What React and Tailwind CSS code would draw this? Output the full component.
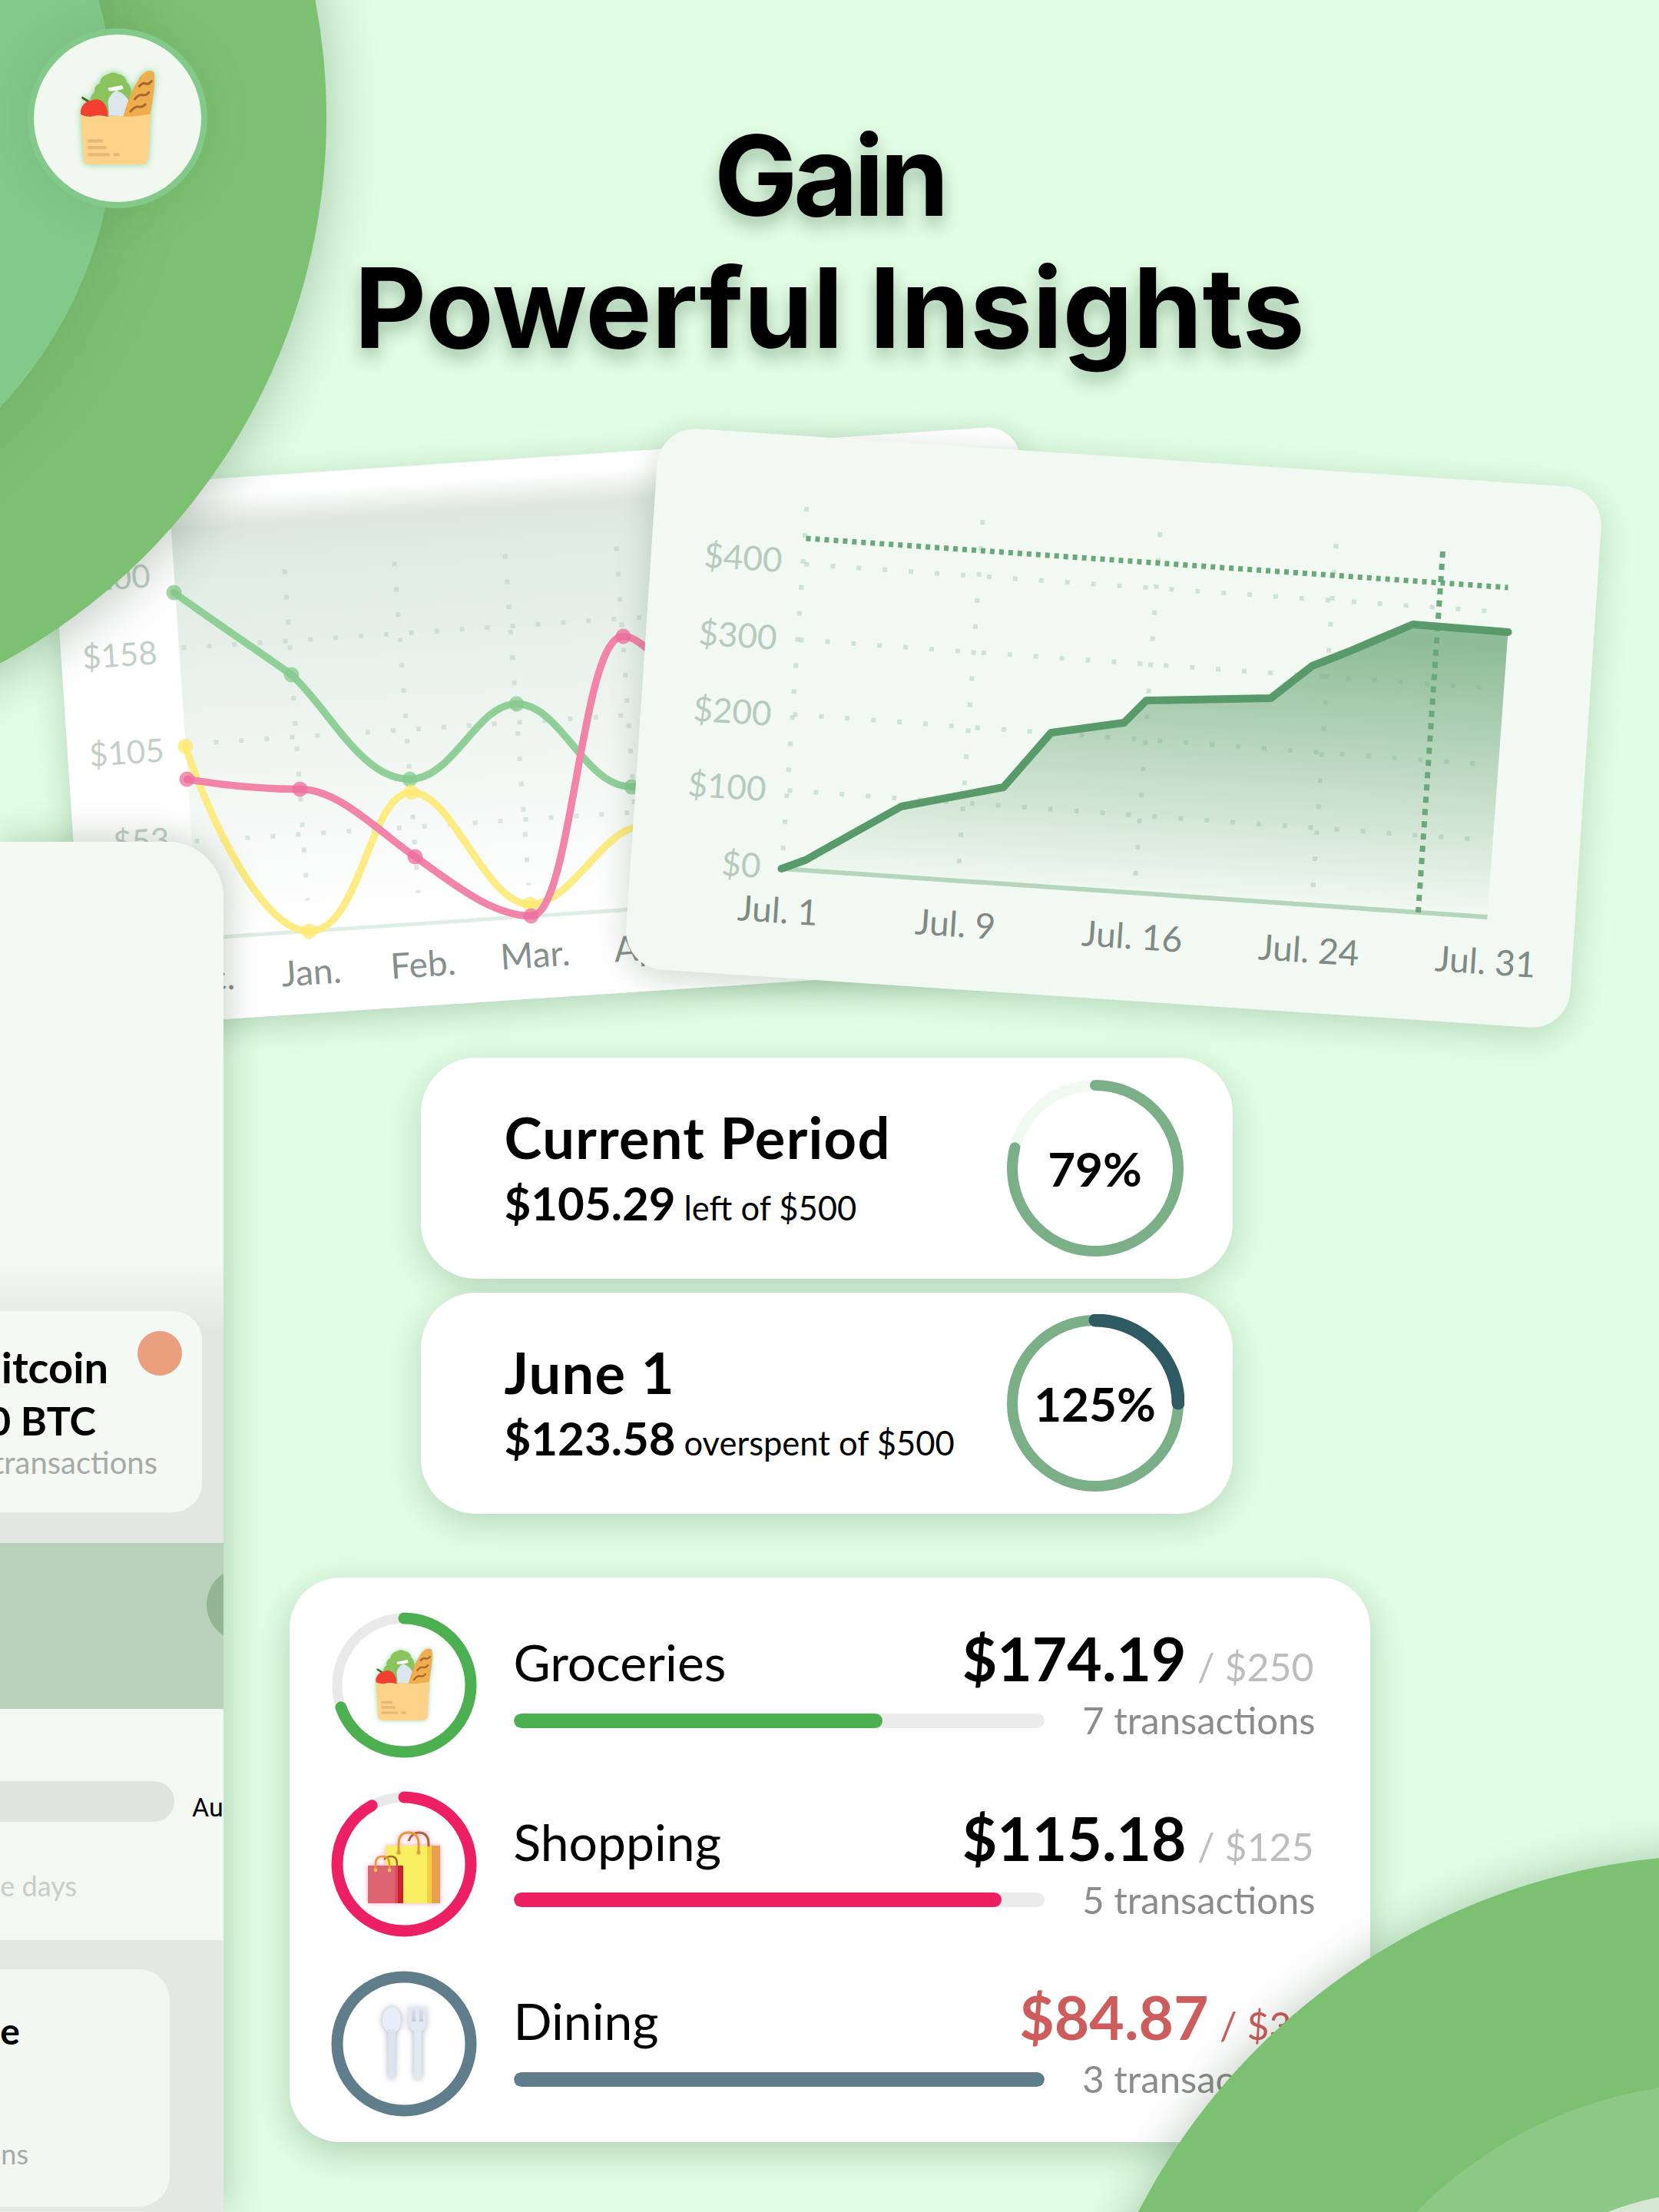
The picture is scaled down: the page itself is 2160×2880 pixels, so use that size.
import React from "react";

function GroceryBag({ className }) {
  return (
    <svg viewBox="215 185 305 380" className={className}>
      <path d="M262 318 Q258 290 278 275 Q275 250 298 240 Q302 212 330 205 Q350 190 372 205 Q398 208 404 235 Q425 255 420 285 Q428 310 410 345 L280 365 Z" fill="#8bc45c" />
      <path d="M335 365 L330 312 Q335 285 362 268 Q398 280 412 310 L395 368 Z" fill="#dbe6ef" />
      <path d="M330 258 L386 248 L390 262 Q360 272 334 270 Z" fill="#ffffff" />
      <path d="M390 368 Q415 275 458 212 Q488 180 508 196 Q520 225 495 362 Q440 376 390 368 Z" fill="#f0ad4e" />
      <path d="M452 252 Q468 234 480 243 Q490 244 500 232 M435 302 Q452 280 468 287 Q480 288 490 275 M418 350 Q438 326 452 332 Q465 334 476 322" fill="none" stroke="#a5672f" strokeWidth="9" strokeLinecap="round" />
      <path d="M232 297 L265 318" stroke="#3a6b1e" strokeWidth="9" strokeLinecap="round" />
      <path d="M224 345 Q232 312 268 306 Q300 294 320 325 Q332 350 330 372 Q300 362 270 370 Q248 372 224 362 Z" fill="#f13f30" />
      <path d="M224 362 Q248 376 270 369 Q300 360 330 371 Q360 362 390 370 Q430 372 497 360 L487 535 Q485 557 460 557 L260 557 Q238 557 235 535 Z" fill="#fdd38a" />
      <path d="M252 458 H310 V471 H252 Z M252 484 H324 V497 H252 Z M252 512 H336 V524 H252 Z M353 512 H377 V524 H353 Z" fill="#e4b878" />
    </svg>
  );
}

function ShoppingBags({ className }) {
  return (
    <svg viewBox="0 0 100 98" className={className}>
      <rect x="26" y="20" width="54" height="75" fill="#f9ef62" />
      <rect x="80" y="20" width="6" height="75" fill="#f6d03c" />
      <rect x="86" y="20" width="11" height="75" fill="#e8a04f" />
      <path d="M56 14 Q60 3 69 3 Q82 3 82 18 V21" fill="none" stroke="#a9683a" strokeWidth="3" />
      <path d="M43 29 V18 Q43 3 56 3 Q69 3 69 18 V29" fill="none" stroke="#e39a34" strokeWidth="3" />
      <circle cx="43" cy="29" r="2.6" fill="#e39a34" />
      <circle cx="69" cy="29" r="2.6" fill="#e39a34" />
      <rect x="3" y="46" width="35" height="49" fill="#dd6470" />
      <rect x="38" y="46" width="4" height="49" fill="#d94d5c" />
      <rect x="42" y="46" width="7" height="49" fill="#c9222f" />
      <path d="M24 38 Q28 34 33 34 Q41 34 41 44 V46" fill="none" stroke="#a9683a" strokeWidth="2.5" />
      <path d="M13 52 V44 Q13 34 22 34 Q31 34 31 44 V52" fill="none" stroke="#e39a34" strokeWidth="2.5" />
      <circle cx="13" cy="52" r="2.4" fill="#f2c14e" />
      <circle cx="31" cy="52" r="2.4" fill="#f2c14e" />
    </svg>
  );
}

function Cutlery({ className }) {
  return (
    <svg viewBox="0 0 70 102" className={className}>
      <ellipse cx="19" cy="20" rx="12" ry="17" fill="#e8eef9" />
      <path d="M14 32 L15 94 Q19 100 23 94 L24 32 Z" fill="#dde4f0" />
      <path d="M41 3 H45 V22 H50 V3 H55 V22 H60 V3 H64 V22 Q64 31 58 35 L58 94 Q53 100 48 94 L48 35 Q41 31 41 22 Z" fill="#e1e7f3" />
    </svg>
  );
}

function Ring({ size, r, width, track, color, value, trackWidth, children, extra, extraWidth }) {
  const c = size / 2;
  return (
    <div className="relative flex shrink-0 items-center justify-center" style={{ width: size, height: size }}>
      <svg viewBox={`0 0 ${size} ${size}`} className="absolute inset-0 h-full w-full -rotate-90" fill="none">
        <circle cx={c} cy={c} r={r} stroke={track} strokeWidth={trackWidth || width} />
        {value >= 100 ? (
          <circle cx={c} cy={c} r={r} stroke={color} strokeWidth={width} />
        ) : (
          <circle cx={c} cy={c} r={r} stroke={color} strokeWidth={width} strokeLinecap="round" pathLength="100" strokeDasharray={`${value} 100`} />
        )}
        {extra ? (
          <circle cx={c} cy={c} r={r} stroke={extra} strokeWidth={extraWidth} strokeLinecap="round" pathLength="100" strokeDasharray="25 100" />
        ) : null}
      </svg>
      {children}
    </div>
  );
}

function PeriodCard({ title, amount, note, pct, value, extra }) {
  return (
    <div className="flex h-[288px] w-[1057px] items-center justify-between rounded-[72px] bg-white pl-[109px] pr-[63px] shadow-[0_12px_44px_rgba(20,70,30,0.2)]">
      <div className="flex flex-col pt-[7px] text-black">
        <div className="text-[74px] font-bold leading-[80px] tracking-[1.3px]">{title}</div>
        <div className="mt-[9px] flex items-baseline whitespace-nowrap leading-[72px]">
          <span className="text-[60px] font-bold">{amount}</span>
          <span className="ml-[11px] text-[43.5px] font-normal">{note}</span>
        </div>
      </div>
      <Ring size={232} r={108} width={14} track="#f0faf0" color="#7baf87" value={value} extra={extra} extraWidth={17}>
        <span className="relative text-[62px] font-bold leading-none text-black">{pct}</span>
      </Ring>
    </div>
  );
}

function CategoryRow({ icon, label, amount, limit, count, color, track, value, over }) {
  return (
    <div className="flex h-[233.5px] items-center">
      <Ring size={190} r={87} width={15} track={track} trackWidth={13} color={color} value={value}>
        {icon}
      </Ring>
      <div className="ml-[48px] flex w-[1042px] flex-col">
        <div className="-mt-[4px] flex h-[84px] items-baseline justify-between">
          <span className="text-[66px] font-normal leading-[84px] text-black">{label}</span>
          <span className="flex items-baseline whitespace-nowrap">
            <span className={`text-[78.5px] font-bold leading-[84px] ${over ? "text-[#cd5c5c]" : "text-black"}`}>{amount}</span>
            <span className={`ml-[14.5px] text-[50px] font-normal ${over ? "text-[#cd5c5c]" : "text-[#bdbdbd]"}`}>{limit}</span>
          </span>
        </div>
        <div className="mt-[11px] flex h-[54px] items-center justify-between">
          <div className="mt-[2px] h-[19px] w-[691px] overflow-hidden rounded-full bg-[#ebebeb]">
            <div className="h-full rounded-full" style={{ width: `${value}%`, background: color }} />
          </div>
          <span className="-mr-[2px] whitespace-nowrap text-[49px] font-normal leading-[54px] text-[#8c8c8c]">{count}</span>
        </div>
      </div>
    </div>
  );
}

function Label({ x, y, rot, children, anchor, className }) {
  return (
    <text x={x} y={y} textAnchor={anchor || "start"} transform={`rotate(${rot} ${x} ${y})`} className={className}>
      {children}
    </text>
  );
}

function Dots({ lines, color, gap, opacity }) {
  return (
    <g stroke={color} strokeWidth="6" strokeOpacity={opacity} strokeDasharray={`6 ${gap}`}>
      {lines.map((l, i) => (
        <line key={i} x1={l[0]} y1={l[1]} x2={l[2]} y2={l[3]} />
      ))}
    </g>
  );
}

function BackChart() {
  const labelY = "fill-[#c3cfc8] text-[42px] font-normal";
  const labelX = "fill-[#868f8b] text-[46px] font-normal";
  const nodes = (pts, color) =>
    pts.map((p, i) => <circle key={i} cx={p[0]} cy={p[1]} r="10" fill={color} opacity="0.75" />);
  return (
    <div className="absolute left-[86.5px] top-[594.5px] z-10 h-[703px] w-[1263px] -rotate-[3.8deg] overflow-hidden rounded-[42px] bg-white shadow-[0_10px_40px_rgba(20,70,30,0.22)]">
      <svg viewBox="0 0 1263 703" className="absolute inset-0 h-full w-full" fill="none">
        <defs>
          <linearGradient id="plotBg" x1="0" y1="0" x2="0" y2="1">
            <stop offset="0" stopColor="#ffffff" />
            <stop offset="0.07" stopColor="#dde6df" />
            <stop offset="0.14" stopColor="#dfebe3" />
            <stop offset="1" stopColor="#ffffff" />
          </linearGradient>
        </defs>
        <rect x="154" y="22" width="1109" height="574" fill="url(#plotBg)" />
        <g transform="translate(631.5 351.5) rotate(3.8) translate(-718 -946)">
          <Dots
            color="#a9c6b2"
            opacity="0.4"
            gap="27"
            lines={[
              [236, 843, 900, 799],
              [278, 966, 900, 925],
              [253, 1095, 900, 1052],
              [370, 741, 400, 1172],
              [513, 731, 544, 1162],
              [657, 721, 688, 1152],
              [802, 711, 832, 1142],
            ]}
          />
          <line x1="250" y1="1222" x2="860" y2="1181" stroke="#dfeee4" strokeWidth="5" />
          <g strokeWidth="9.5" strokeLinecap="round">
            <path d="M226 771 C280 810 340 850 379 878 C430 925 470 1014 533 1014 C590 1014 620 916 672 916 C730 916 760 1024 822 1024 C860 1024 900 1000 920 990" stroke="#90d098" />
            <path d="M241 971 C270 1060 340 1212 402 1212 C470 1212 480 1031 535 1031 C590 1031 630 1177 690 1177 C740 1177 780 1090 822 1078 C850 1070 880 1060 900 1050" stroke="#fdec83" />
            <path d="M243 1014 C290 1022 340 1027 390 1027 C440 1027 490 1080 540 1115 C590 1150 640 1192 691 1192 C745 1192 755 828 811 828 C825 828 838 840 860 860" stroke="#f283a9" />
          </g>
          {nodes([[226, 771], [379, 878], [533, 1014], [672, 916], [822, 1024]], "#86c98e")}
          {nodes([[241, 971], [402, 1212], [535, 1031], [690, 1177]], "#fde96f")}
          {nodes([[243, 1014], [390, 1027], [540, 1115], [691, 1192], [811, 828]], "#ee6e9c")}
          <Label x={196} y={764} rot={-3.8} anchor="end" className={labelY}>$200</Label>
          <Label x={205} y={864} rot={-3.8} anchor="end" className={labelY}>$158</Label>
          <Label x={214} y={991} rot={-3.8} anchor="end" className={labelY}>$105</Label>
          <Label x={221} y={1107} rot={-3.8} anchor="end" className={labelY}>$53</Label>
          <Label x={306} y={1287} rot={-3.8} anchor="end" className={labelX}>Dec.</Label>
          <Label x={367} y={1284} rot={-3.8} className={labelX}>Jan.</Label>
          <Label x={509} y={1274} rot={-3.8} className={labelX}>Feb.</Label>
          <Label x={652} y={1262} rot={-3.8} className={labelX}>Mar.</Label>
          <Label x={800} y={1252} rot={-3.8} className={labelX}>Apr.</Label>
        </g>
      </svg>
    </div>
  );
}

function FrontChart() {
  const labelY = "fill-[#b7cabb] text-[44px] font-normal";
  const labelX = "fill-[#7e8a83] text-[46px] font-normal";
  const line = "1017,1131 1049,1119.5 1062,1112 1173,1050 1306,1025 1368,954 1463,941 1492,912 1654,909 1708,867 1754,849 1839,813 1963,823";
  return (
    <div className="absolute left-[833.5px] top-[595px] z-20 h-[706px] w-[1232px] rotate-[3.8deg] rounded-[50px] bg-[#f2f9f2] shadow-[0_10px_44px_rgba(20,70,30,0.2)]">
      <svg viewBox="0 0 1232 706" className="absolute inset-0 h-full w-full" fill="none">
        <defs>
          <linearGradient id="areaFill" gradientUnits="userSpaceOnUse" x1="1500" y1="820" x2="1480" y2="1170">
            <stop offset="0" stopColor="#90bd99" />
            <stop offset="1" stopColor="#f2f9f2" />
          </linearGradient>
        </defs>
        <g transform="translate(616 353) rotate(-3.8) translate(-1449.5 -948)">
          <polygon points={`${line} 1936,1194`} fill="url(#areaFill)" />
          <Dots
            color="#7fae8c"
            opacity="0.3"
            gap="28"
            lines={[
              [1047, 734.6, 1944, 796],
              [1040, 833, 1938, 896],
              [1032, 930, 1929, 995],
              [1025, 1029, 1924, 1093],
              [1279, 677, 1248, 1126],
              [1510, 693, 1478, 1141],
              [1739, 708, 1709, 1157],
              [1050, 660, 1018, 1120],
            ]}
          />
          <line x1="1017" y1="1131" x2="1936" y2="1194" stroke="#b5d6bc" strokeWidth="6" />
          <line x1="1049" y1="701" x2="1963" y2="765" stroke="#6aa87c" strokeWidth="7" strokeDasharray="6 6" />
          <line x1="1878" y1="718" x2="1846" y2="1188" stroke="#6aa87c" strokeWidth="7" strokeDasharray="8 8" />
          <polyline points={line} stroke="#589a6a" strokeWidth="10" strokeLinecap="round" strokeLinejoin="round" />
          <Label x={1017} y={745} rot={3.8} anchor="end" className={labelY}>$400</Label>
          <Label x={1010} y={846} rot={3.8} anchor="end" className={labelY}>$300</Label>
          <Label x={1003} y={945} rot={3.8} anchor="end" className={labelY}>$200</Label>
          <Label x={996} y={1043} rot={3.8} anchor="end" className={labelY}>$100</Label>
          <Label x={989} y={1143} rot={3.8} anchor="end" className={labelY}>$0</Label>
          <Label x={959} y={1198} rot={3.8} className={labelX}>Jul. 1</Label>
          <Label x={1190} y={1216} rot={3.8} className={labelX}>Jul. 9</Label>
          <Label x={1407} y={1231} rot={3.8} className={labelX}>Jul. 16</Label>
          <Label x={1637} y={1249} rot={3.8} className={labelX}>Jul. 24</Label>
          <Label x={1867} y={1264} rot={3.8} className={labelX}>Jul. 31</Label>
        </g>
      </svg>
    </div>
  );
}

function SidePanel() {
  return (
    <aside className="absolute left-0 top-[1096px] z-20 flex h-[1784px] w-[291px] flex-col overflow-hidden rounded-tr-[73px] bg-[#f3f8f1] shadow-[0_0_50px_rgba(20,70,30,0.28)]">
      <div className="flex h-[913px] shrink-0 flex-col items-end bg-[linear-gradient(#f3f8f1_60%,#e3e7e2_70%,#e3e7e2_100%)] pr-[28px] pt-[611px]">
        <div className="relative flex h-[262px] w-full flex-col items-end rounded-r-[38px] bg-[#f4f9f3]">
          <div className="absolute right-[26px] top-[26px] h-[58px] w-[58px] rounded-full bg-[#e99f7d]" />
          <div className="mr-[122px] mt-[40px] text-[56px] font-bold leading-[66px] text-black">Bitcoin</div>
          <div className="mr-[138px] mt-[3px] whitespace-nowrap text-[52px] font-bold leading-[66px] text-black">0.00 BTC</div>
          <div className="mr-[58px] mt-[-4px] whitespace-nowrap text-[40px] leading-[52px] text-[#a5aba6]">3 transactions</div>
        </div>
      </div>
      <div className="flex h-[216px] shrink-0 justify-end bg-[#b9d0ba] pt-[32px]">
        <div className="mr-[-74px] h-[96px] w-[96px] shrink-0 rounded-full bg-[#93b595]" />
      </div>
      <div className="h-[301px] shrink-0 bg-[#f3f8f3] pt-[94px]">
        <div className="flex h-[53px] items-center">
          <div className="h-full w-[227px] shrink-0 rounded-r-full bg-[#e1e3de]" />
          <span className="ml-[23px] mt-[16px] font-[Roboto,sans-serif] text-[34px] text-black">Aug.</span>
        </div>
        <div className="mr-[191px] mt-[61px] flex justify-end whitespace-nowrap text-[36px] leading-[44px] text-[#c9ccc8]">Three days</div>
      </div>
      <div className="flex-1 bg-[#e4e7e3] pt-[38px]">
        <div className="flex h-[309px] w-[221px] flex-col items-end rounded-r-[40px] bg-[#f2f7f1]">
          <div className="mr-[195px] mt-[50px] whitespace-nowrap text-[48px] font-bold leading-[60px] text-black">Income</div>
          <div className="mr-[184px] mt-[107px] whitespace-nowrap text-[36px] leading-[46px] text-[#a5aba6]">transactions</div>
        </div>
      </div>
    </aside>
  );
}

export default function App() {
  return (
    <div className="relative flex h-[2880px] w-[2160px] flex-col items-center overflow-hidden bg-[#e1fde4] font-[Lato,sans-serif]">
      <h1 className="pt-[143px] text-center font-[Inter,sans-serif] text-[145px] font-bold leading-[172px] text-black [text-shadow:0_12px_22px_rgba(20,60,30,0.3)]">
        <span className="tracking-[-5.5px]">Gain</span>
        <br />
        Powerful Insights
      </h1>

      <BackChart />
      <SidePanel />
      <FrontChart />

      <section className="mr-[8px] mt-[890px] flex flex-col gap-[18px]">
        <PeriodCard title="Current Period" amount="$105.29" note="left of $500" pct="79%" value={79} />
        <PeriodCard title="June 1" amount="$123.58" note="overspent of $500" pct="125%" value={100} extra="#2e5b63" />
      </section>

      <section className="relative mt-[83px] h-[735px] w-[1407px] rounded-[66px] bg-white pl-[54px] pt-[23px] shadow-[0_14px_44px_rgba(20,70,30,0.24)]">
        <CategoryRow
          icon={<GroceryBag className="h-[97px] w-[78px] drop-shadow-[0_0_3px_rgba(90,190,110,0.6)]" />}
          label="Groceries"
          amount="$174.19"
          limit="/ $250"
          count="7 transactions"
          color="#4caf50"
          track="#e9e9e9"
          value={69.6}
        />
        <CategoryRow
          icon={<ShoppingBags className="mt-[10px] h-[98px] w-[100px] drop-shadow-[0_0_3px_rgba(240,90,150,0.55)]" />}
          label="Shopping"
          amount="$115.18"
          limit="/ $125"
          count="5 transactions"
          color="#ed2063"
          track="#e9e9e9"
          value={92}
        />
        <CategoryRow
          icon={<Cutlery className="h-[102px] w-[70px] drop-shadow-[0_0_4px_rgba(90,105,130,0.55)]" />}
          label="Dining"
          amount="$84.87"
          limit="/ $30"
          count="3 transactions"
          color="#607d8b"
          track="#e9e9e9"
          value={100}
          over
        />
      </section>

      <div className="absolute left-[-1189px] top-[-654px] z-30 h-[1614px] w-[1614px] rounded-full bg-[#7cc172] shadow-[0_8px_70px_rgba(20,60,30,0.3)]" />
      <div className="absolute left-[-950px] top-[-397px] z-30 h-[1100px] w-[1100px] rounded-full bg-[#83c98a] shadow-[0_0_110px_rgba(0,0,0,0.12)]" />
      <div className="absolute left-[36px] top-[37px] z-30 flex h-[234px] w-[234px] items-center justify-center rounded-full bg-[#83c98a] shadow-[0_0_70px_rgba(0,0,0,0.08)]">
        <div className="flex h-[218px] w-[218px] items-center justify-center rounded-full bg-[#f1f8f0]">
          <GroceryBag className="mt-[-2px] h-[127px] w-[102px] drop-shadow-[0_0_4px_rgba(90,190,110,0.65)]" />
        </div>
      </div>

      <div className="absolute left-[1387px] top-[2415px] z-30 h-[1714px] w-[1714px] rounded-full bg-[#7cc172] shadow-[0_0_60px_rgba(20,60,30,0.28)]" />
      <div className="absolute left-[1684px] top-[2712px] z-30 h-[1120px] w-[1120px] rounded-full bg-[#8ec887]" />
      <div className="absolute left-[1824px] top-[2852px] z-30 h-[840px] w-[840px] rounded-full bg-[#d6e8d4]" />
    </div>
  );
}
